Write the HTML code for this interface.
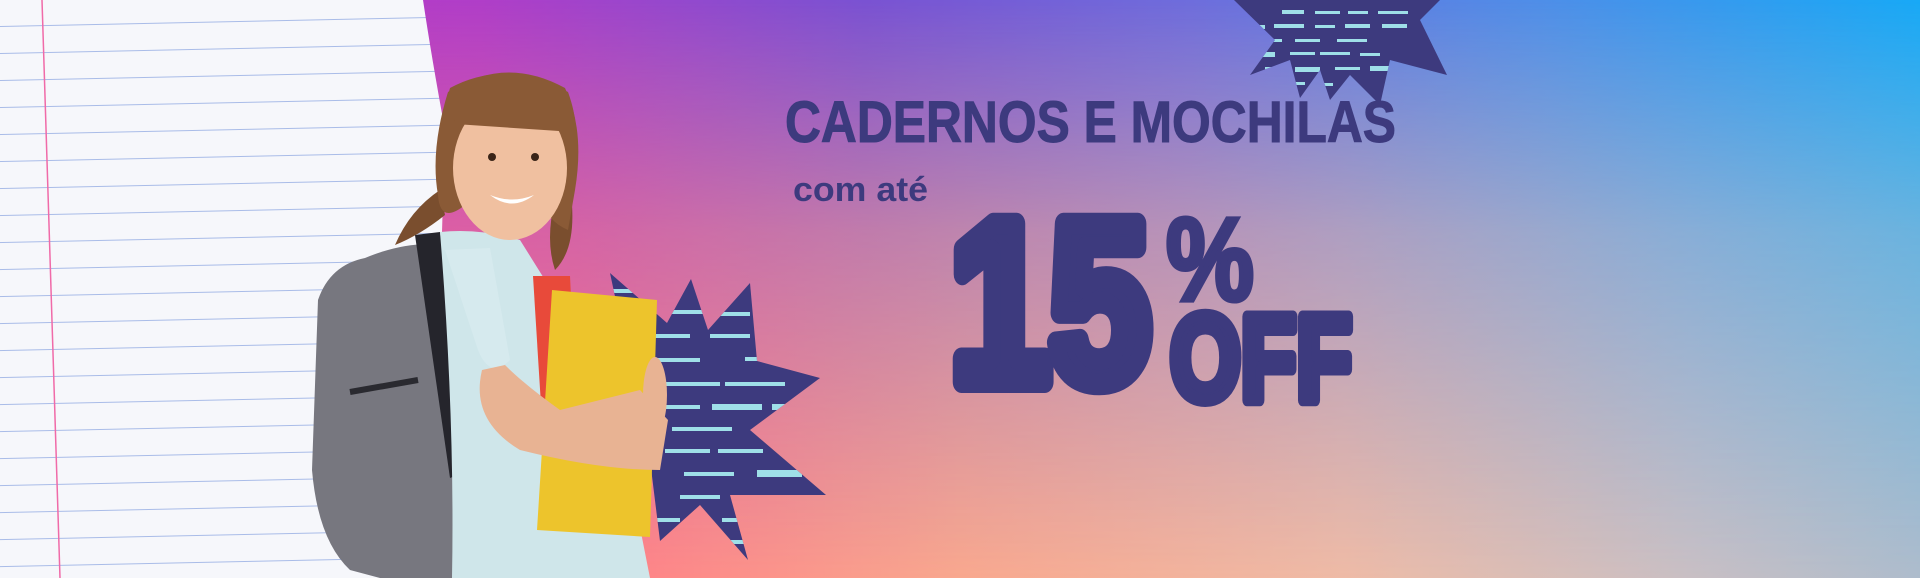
<!DOCTYPE html>
<html><head><meta charset="utf-8"><style>
html,body{margin:0;padding:0}
body{width:1920px;height:578px;overflow:hidden;position:relative;background:#c9b}
.bg1{position:absolute;inset:0;background:linear-gradient(to right,#c036c2 0%,#b03ec8 25%,#7a52d2 45%,#6e6ddc 62%,#4f8ee8 80%,#18a9f6 100%)}
.bg2{position:absolute;inset:0;background:linear-gradient(to right,#ff6a8e 0%,#ff7f86 30%,#f9a88e 50%,#efbba6 70%,#c9bfc4 88%,#aebccc 100%);-webkit-mask-image:linear-gradient(to bottom,rgba(0,0,0,0) 0%,rgba(0,0,0,.55) 40%,#000 100%);mask-image:linear-gradient(to bottom,rgba(0,0,0,0) 0%,rgba(0,0,0,.55) 40%,#000 100%)}
svg{position:absolute;left:0;top:0}
</style></head><body>
<div class="bg1"></div><div class="bg2"></div>
<svg width="1920" height="578" viewBox="0 0 1920 578">
<defs>
<pattern id="lines" width="1920" height="27" patternUnits="userSpaceOnUse" patternTransform="rotate(-1.2)">
<rect width="1920" height="27" fill="#f6f7fb"/>
<rect y="26" width="1920" height="1" fill="#a9bce8"/>
</pattern>
<clipPath id="s1"><polygon points="610,273 667,323 691,279 708,330 750,283 757,361 820,378 750,430 826,495 730,495 748,560 700,505 660,541 650,460 620,420 640,360 620,320"/></clipPath>
<clipPath id="s2"><polygon points="1234,0 1440,0 1420,20 1447,75 1390,60 1380,105 1350,75 1330,100 1320,70 1300,98 1290,60 1250,75 1275,40"/></clipPath>
</defs>
<!-- paper -->
<path d="M0,0 L423,0 Q432,60 445,130 L440,300 L420,578 L0,578 Z" fill="url(#lines)"/>
<line x1="42" y1="0" x2="60" y2="578" stroke="#f06aa8" stroke-width="1.5"/>
<!-- starburst bottom -->
<g clip-path="url(#s1)">
<rect x="600" y="270" width="230" height="300" fill="#3d3a7e"/>
<g fill="#9fdfe8">
<rect x="610" y="289" width="40" height="4"/><rect x="670" y="310" width="35" height="4"/><rect x="720" y="312" width="30" height="4"/>
<rect x="640" y="334" width="50" height="4"/><rect x="710" y="334" width="40" height="4"/>
<rect x="650" y="358" width="50" height="4"/><rect x="745" y="357" width="15" height="4"/>
<rect x="660" y="382" width="60" height="4"/><rect x="725" y="382" width="60" height="4"/>
<rect x="660" y="405" width="40" height="4"/><rect x="712" y="404" width="50" height="6"/><rect x="772" y="404" width="20" height="6"/>
<rect x="672" y="427" width="60" height="4"/>
<rect x="665" y="449" width="45" height="4"/><rect x="718" y="449" width="45" height="4"/>
<rect x="684" y="472" width="50" height="4"/><rect x="757" y="470" width="45" height="7"/>
<rect x="680" y="495" width="40" height="4"/>
<rect x="650" y="518" width="30" height="4"/><rect x="722" y="518" width="20" height="4"/><rect x="730" y="540" width="15" height="4"/>
</g></g>
<!-- starburst top -->
<g clip-path="url(#s2)">
<rect x="1230" y="0" width="220" height="120" fill="#3d3a7e"/>
<g fill="#9fdfe8">
<rect x="1282" y="10" width="22" height="4"/><rect x="1315" y="11" width="25" height="3"/><rect x="1348" y="11" width="20" height="3"/><rect x="1378" y="11" width="30" height="3"/>
<rect x="1240" y="25" width="25" height="4"/><rect x="1274" y="24" width="30" height="4"/><rect x="1315" y="25" width="20" height="3"/><rect x="1345" y="24" width="25" height="4"/><rect x="1382" y="24" width="25" height="4"/>
<rect x="1262" y="39" width="20" height="3"/><rect x="1295" y="39" width="25" height="3"/><rect x="1337" y="39" width="30" height="3"/>
<rect x="1255" y="52" width="20" height="5"/><rect x="1290" y="52" width="25" height="3"/><rect x="1320" y="52" width="30" height="3"/><rect x="1360" y="53" width="20" height="3"/>
<rect x="1265" y="67" width="20" height="4"/><rect x="1295" y="67" width="25" height="5"/><rect x="1335" y="67" width="25" height="3"/><rect x="1370" y="66" width="30" height="5"/>
<rect x="1275" y="82" width="30" height="3"/><rect x="1313" y="83" width="20" height="3"/>
</g></g>
<!-- girl -->
<!-- ponytails -->
<path d="M440,190 Q410,210 395,245 Q420,235 445,215Z" fill="#7a4e2e"/>
<path d="M555,200 Q545,240 555,270 Q575,250 572,205Z" fill="#7a4e2e"/>
<!-- backpack -->
<path d="M365,258 Q330,265 318,300 L312,470 Q318,540 350,570 L380,578 L470,578 L465,250 Q420,235 365,258 Z" fill="#77777f"/>
<path d="M415,235 L440,232 L470,470 L450,478 Z" fill="#25252c"/>
<path d="M350,392 L418,380" stroke="#2a2a30" stroke-width="6"/>
<!-- shirt -->
<path d="M440,232 Q480,228 520,240 L545,280 L560,360 L605,350 L650,578 L452,578 Q455,420 440,232 Z" fill="#cfe6ea"/>
<path d="M445,250 L490,248 L510,360 Q490,380 478,350 Z" fill="#d6eaee"/>
<!-- books -->
<path d="M533,276 L570,276 L580,480 L545,470 Z" fill="#e84a3a"/>
<path d="M552,290 L657,300 L650,537 L537,530 Z" fill="#edc42c"/>
<!-- arm -->
<path d="M482,370 Q470,420 520,450 Q600,470 660,470 L668,420 L640,390 L560,410 Q525,385 505,365 Z" fill="#e8b393"/>
<ellipse cx="655" cy="395" rx="12" ry="38" fill="#e8b393"/>
<!-- head -->
<path d="M448,92 Q505,55 565,88 Q585,130 575,190 L568,230 Q545,220 545,200 L465,205 Q440,225 438,195 Q430,150 448,92Z" fill="#8a5a36"/>
<ellipse cx="510" cy="168" rx="57" ry="72" fill="#f0c0a0"/>
<path d="M450,88 Q505,58 568,92 Q578,120 574,135 Q560,110 545,112 L455,118 Q448,140 452,160 Q440,120 450,88Z" fill="#8a5a36"/>
<path d="M453,100 L570,100 L574,132 L455,124 Z" fill="#8a5a36"/>
<circle cx="492" cy="157" r="4" fill="#3a2418"/><circle cx="535" cy="157" r="4" fill="#3a2418"/>
<path d="M490,195 Q512,212 534,195 Q512,204 490,195Z" fill="#fff"/>
<!-- text -->
<g fill="#3d3a7e" font-family="'Liberation Sans',sans-serif" font-weight="bold">
<text x="785" y="142" font-size="58" stroke="#3d3a7e" stroke-width="1" textLength="611" lengthAdjust="spacingAndGlyphs">CADERNOS E MOCHILAS</text>
<text x="793" y="201" font-size="34" textLength="135" lengthAdjust="spacingAndGlyphs">com até</text>
<text x="950" y="382" font-size="230" stroke="#3d3a7e" stroke-width="22" stroke-linejoin="round" textLength="200" lengthAdjust="spacingAndGlyphs">15</text>
<text x="1166" y="300" font-size="118" stroke="#3d3a7e" stroke-width="5" textLength="88" lengthAdjust="spacingAndGlyphs">%</text>
<text x="1170" y="400" font-size="122" stroke="#3d3a7e" stroke-width="12" stroke-linejoin="round" textLength="182" lengthAdjust="spacingAndGlyphs">OFF</text>
</g>
</svg>
</body></html>
